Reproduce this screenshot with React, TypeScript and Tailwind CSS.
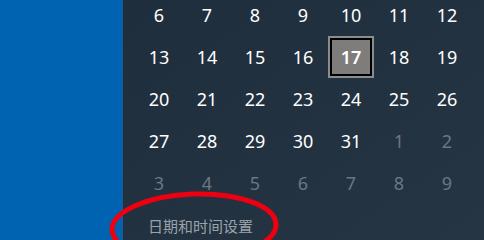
import React from 'react';

const rows: { n: number; dim?: boolean }[][] = [
  [6, 7, 8, 9, 10, 11, 12].map((n) => ({ n })),
  [13, 14, 15, 16, 17, 18, 19].map((n) => ({ n })),
  [20, 21, 22, 23, 24, 25, 26].map((n) => ({ n })),
  [...[27, 28, 29, 30, 31].map((n) => ({ n })), { n: 1, dim: true }, { n: 2, dim: true }],
  [3, 4, 5, 6, 7, 8, 9].map((n) => ({ n, dim: true })),
];

const TODAY = 17;

export default function App() {
  return (
    <div className="relative flex h-[240px] w-[484px] overflow-hidden" style={{ fontFamily: '"Noto Sans", "Open Sans", sans-serif' }}>
      <div className="w-[123px] shrink-0 border-r border-[#1a5a94] bg-[#0063b1]" />
      <div className="flex-1 bg-gradient-to-br from-[#1f2e3d] to-[#253544] pl-[12px]">
        <div className="-mt-[6px] grid grid-cols-[repeat(7,48px)]">
          {rows.flat().map((d, i) =>
            d.n === TODAY && !d.dim ? (
              <div key={i} className="flex h-[42px] items-center justify-center">
                <div className="flex h-[42px] w-[46px] items-center justify-center border-2 border-[#8a8c8e] bg-black p-[2px]">
                  <div className="flex h-full w-full items-center justify-center bg-[#7f7d7b] text-[18px] font-semibold text-white">
                    {d.n}
                  </div>
                </div>
              </div>
            ) : (
              <div
                key={i}
                className={`flex h-[42px] items-center justify-center text-[18px] ${d.dim ? 'text-[#6b7782]' : 'text-white'}`}
              >
                {d.n}
              </div>
            )
          )}
        </div>
        <div
          className="mt-[11px] pl-[13px] text-[15px] text-[#9aa3ab]"
          style={{ fontFamily: '"Noto Sans CJK SC", sans-serif' }}
        >
          日期和时间设置
        </div>
      </div>
      <svg className="pointer-events-none absolute left-0 top-0" width="484" height="240" viewBox="0 0 484 240">
        <ellipse cx="194" cy="227" rx="82" ry="33" fill="none" stroke="#ee0010" strokeWidth="5" transform="rotate(-2 194 227)" />
      </svg>
    </div>
  );
}
